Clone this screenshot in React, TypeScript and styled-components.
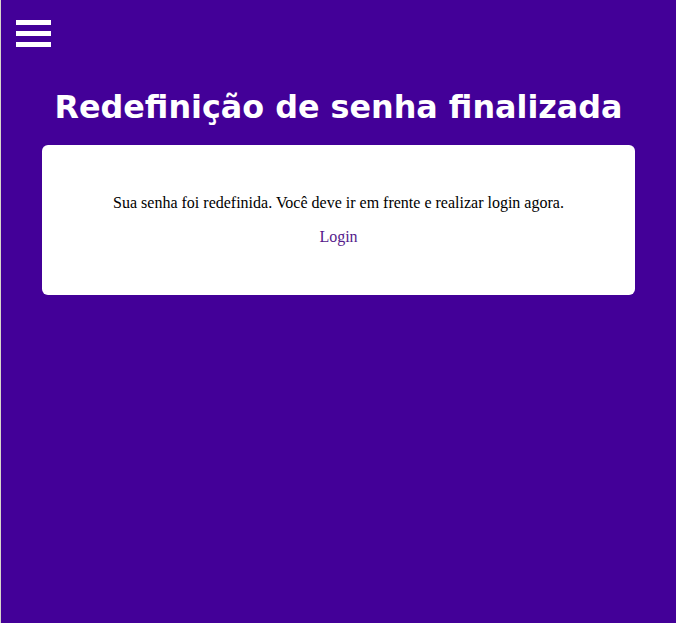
import React from "react";
import styled, { createGlobalStyle } from "styled-components";

const Global = createGlobalStyle`
  html, body { margin: 0; padding: 0; background: #d9d4cc; }
  body { font-family: "Liberation Serif", "Times New Roman", serif; }
`;

const Page = styled.div`
  min-height: 623px;
  margin-left: 1px;
  background: #430098;
  box-sizing: border-box;
  padding: 20px 41px 0 41px;
`;

const Menu = styled.button`
  display: flex;
  flex-direction: column;
  gap: 6px;
  padding: 0;
  margin: 0 0 0 -26px;
  background: none;
  border: none;
  cursor: pointer;
  width: 35px;
`;

const Bar = styled.span`
  display: block;
  width: 35px;
  height: 5px;
  background: #ffffff;
`;

const Title = styled.h1`
  margin: 40px 0 18px;
  text-align: center;
  color: #ffffff;
  font-family: "DejaVu Sans", Verdana, sans-serif;
  font-weight: bold;
  font-size: 31.8px;
  line-height: 40px;
`;

const Card = styled.div`
  background: #ffffff;
  border-radius: 6px;
  height: 150px;
  box-sizing: border-box;
  padding: 49px 20px 0;
  text-align: center;
  font-size: 16px;
  color: #000000;
`;

const Text = styled.p`
  margin: 0 0 16px;
`;

const LoginLink = styled.a`
  color: #551a8b;
  text-decoration: none;
`;

export default function App() {
  return (
    <>
      <Global />
      <Page>
        <Menu aria-label="menu">
          <Bar />
          <Bar />
          <Bar />
        </Menu>
        <Title>Redefinição de senha finalizada</Title>
        <Card>
          <Text>Sua senha foi redefinida. Você deve ir em frente e realizar login agora.</Text>
          <Text>
            <LoginLink href="#">Login</LoginLink>
          </Text>
        </Card>
      </Page>
    </>
  );
}
